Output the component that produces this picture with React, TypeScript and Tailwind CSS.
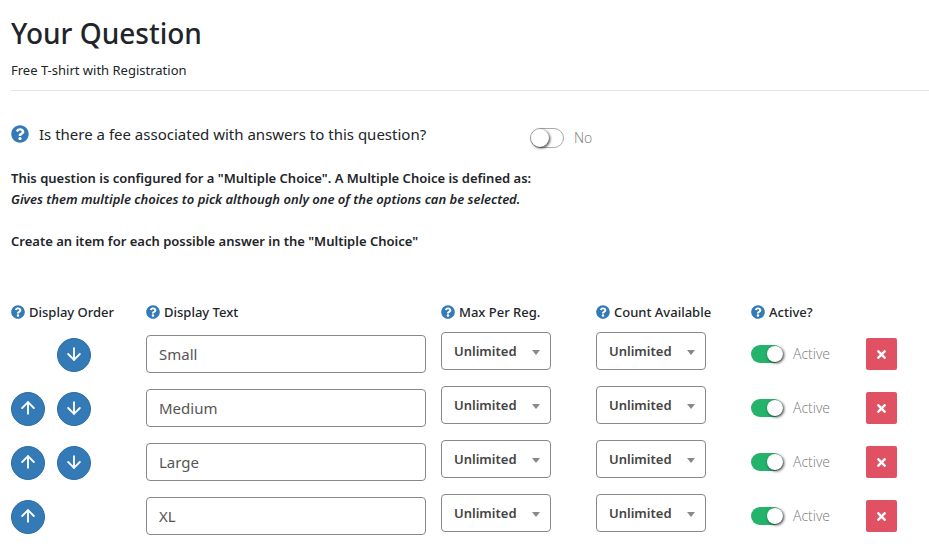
import React, { useState } from "react"
import { FaQuestionCircle, FaTimes } from "react-icons/fa"
import { ArrowDown, ArrowUp } from "lucide-react"

const columns = [
  { label: "Display Order", width: "w-[135px]" },
  { label: "Display Text", width: "w-[295px]" },
  { label: "Max Per Reg.", width: "w-[155px]" },
  { label: "Count Available", width: "w-[155px]" },
  { label: "Active?", width: "w-[115px]" },
]

function HelpButton({ size, label }: { size: number; label: string }) {
  return (
    <button type="button" aria-label={`Help: ${label}`} className="shrink-0 cursor-pointer text-[#337ab7]">
      <FaQuestionCircle size={size} />
    </button>
  )
}

function MoveButton({ direction, onClick }: { direction: "up" | "down"; onClick: () => void }) {
  const Icon = direction === "up" ? ArrowUp : ArrowDown
  return (
    <button
      type="button"
      aria-label={`Move ${direction}`}
      onClick={onClick}
      className="flex size-[34px] cursor-pointer items-center justify-center rounded-full border border-[#2e6da4] bg-[#337ab7] pb-0.5 text-white"
    >
      <Icon size={20} strokeWidth={2.2} />
    </button>
  )
}

function UnlimitedSelect({ label }: { label: string }) {
  return (
    <div className="relative w-[110px]">
      <select
        aria-label={label}
        defaultValue="Unlimited"
        className="h-[38px] w-full appearance-none rounded border border-[#888] bg-white pt-0.5 pl-3 text-[13px] font-semibold text-[#444]"
      >
        <option>Unlimited</option>
        <option>1</option>
        <option>2</option>
        <option>5</option>
      </select>
      <svg viewBox="0 0 8 5" className="pointer-events-none absolute top-[18px] right-[11px] h-[5px] w-2 fill-[#888]">
        <path d="M0 0h8L4 5z" />
      </svg>
    </div>
  )
}

export default function App() {
  const [items, setItems] = useState([
    { id: 1, text: "Small", active: true },
    { id: 2, text: "Medium", active: true },
    { id: 3, text: "Large", active: true },
    { id: 4, text: "XL", active: true },
  ])
  const [hasFee, setHasFee] = useState(false)

  const update = (id: number, changes: { text?: string; active?: boolean }) => {
    setItems(items.map((item) => (item.id === id ? { ...item, ...changes } : item)))
  }

  const swap = (a: number, b: number) => {
    const next = [...items]
    next[a] = items[b]
    next[b] = items[a]
    setItems(next)
  }

  return (
    <main className="bg-white pt-4 pl-[11px] font-['Noto_Sans','Open_Sans',sans-serif] text-[13px] text-[#212529]">
      <header className="border-b border-[#e5e5e5] pb-2.5">
        <h1 className="text-[28px] leading-[34px] font-medium">Your Question</h1>
        <p className="mt-2.5 leading-5">Free T-shirt with Registration</p>
      </header>

      {/* Fee toggle */}
      <div className="flex pt-[29px]">
        <div className="flex w-[519px] items-center gap-2.5 text-[15px] leading-6">
          <HelpButton size={18} label="fee" />
          <label htmlFor="fee">Is there a fee associated with answers to this question?</label>
        </div>
        <div className="flex items-center gap-2.5 pt-2">
          <input
            id="fee"
            type="checkbox"
            role="switch"
            checked={hasFee}
            onChange={(e) => setHasFee(e.target.checked)}
            className="flex h-5 w-[34px] cursor-pointer appearance-none items-center rounded-full border border-[#aaa] bg-white before:size-[18px] before:rounded-full before:bg-white before:shadow-[1px_1px_3px_rgba(0,0,0,0.8)] checked:justify-end checked:border-[#23b36b] checked:bg-[#23b36b]"
          />
          <span className="font-['Open_Sans'] text-sm font-light text-[#777]">{hasFee ? "Yes" : "No"}</span>
        </div>
      </div>

      <div className="mt-5 leading-[21px] font-semibold">
        <p>This question is configured for a "Multiple Choice". A Multiple Choice is defined as:</p>
        <p className="italic">Gives them multiple choices to pick although only one of the options can be selected.</p>
        <p className="mt-[21px]">Create an item for each possible answer in the "Multiple Choice"</p>
      </div>

      {/* Answer items */}
      <table className="mt-[50px] w-full table-fixed text-left">
        <thead>
          <tr>
            {columns.map((col) => (
              <th key={col.label} className={`h-[25px] align-top font-medium ${col.width}`}>
                <div className="flex items-center gap-1 leading-5">
                  <HelpButton size={14} label={col.label} />
                  {col.label}
                </div>
              </th>
            ))}
            <td />
          </tr>
        </thead>
        <tbody>
          {items.map((item, i) => (
            <tr key={item.id} className="h-[54px]">
              <td className="pt-0.5">
                <div className="grid grid-cols-[34px_34px] gap-3">
                  {i > 0 ? <MoveButton direction="up" onClick={() => swap(i, i - 1)} /> : <span />}
                  {i < items.length - 1 && <MoveButton direction="down" onClick={() => swap(i, i + 1)} />}
                </div>
              </td>
              <td>
                <input
                  type="text"
                  aria-label="Display Text"
                  value={item.text}
                  onChange={(e) => update(item.id, { text: e.target.value })}
                  className="block h-[38px] w-[280px] rounded border border-[#888] px-3 text-[15px] text-[#555]"
                />
              </td>
              <td className="pb-1.5">
                <UnlimitedSelect label="Max Per Reg." />
              </td>
              <td className="pb-1.5">
                <UnlimitedSelect label="Count Available" />
              </td>
              <td>
                <label className="flex items-center gap-2.5 font-['Open_Sans'] text-sm font-light text-[#777]">
                  <input
                    type="checkbox"
                    role="switch"
                    checked={item.active}
                    onChange={(e) => update(item.id, { active: e.target.checked })}
                    className="flex h-[18px] w-8 cursor-pointer appearance-none items-center rounded-full bg-[#aaa] before:size-4 before:rounded-full before:bg-white before:shadow-[1px_1px_3px_rgba(0,0,0,0.8)] checked:justify-end checked:bg-[#23b36b]"
                  />
                  Active
                </label>
              </td>
              <td>
                <button
                  type="button"
                  aria-label="Delete"
                  onClick={() => setItems(items.filter((other) => other.id !== item.id))}
                  className="flex h-8 w-[31px] cursor-pointer items-center justify-center rounded-xs bg-[#e05263] text-white"
                >
                  <FaTimes size={13} />
                </button>
              </td>
            </tr>
          ))}
        </tbody>
      </table>
    </main>
  )
}
